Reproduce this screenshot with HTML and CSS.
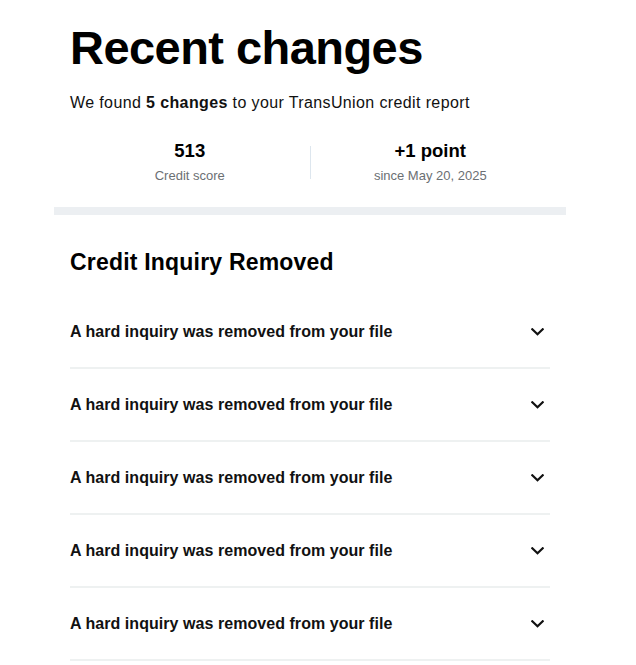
FILE: index.html
```html
<!DOCTYPE html>
<html lang="en">
<head>
<meta charset="utf-8">
<title>Recent changes</title>
<link rel="stylesheet" href="styles.css">
</head>
<body>
<main class="page">
  <header class="intro">
    <h1 class="title">Recent changes</h1>
    <p class="lead">We found <strong>5 changes</strong> to your TransUnion credit report</p>
    <div class="stats">
      <div class="stat">
        <div class="stat-value">513</div>
        <div class="stat-label">Credit score</div>
      </div>
      <div class="stat-divider"></div>
      <div class="stat">
        <div class="stat-value">+1 point</div>
        <div class="stat-label">since May 20, 2025</div>
      </div>
    </div>
  </header>
  <div class="band"></div>
  <section class="section">
    <h2 class="section-title">Credit Inquiry Removed</h2>
    <ul class="rows">
      <li class="row"><span class="row-text">A hard inquiry was removed from your file</span><svg class="chev" viewBox="0 0 13 8" width="13" height="8"><path d="M1.3 1.3 L6.5 6.3 L11.7 1.3" fill="none" stroke="#111" stroke-width="2.2" stroke-linecap="square"/></svg></li>
      <li class="row"><span class="row-text">A hard inquiry was removed from your file</span><svg class="chev" viewBox="0 0 13 8" width="13" height="8"><path d="M1.3 1.3 L6.5 6.3 L11.7 1.3" fill="none" stroke="#111" stroke-width="2.2" stroke-linecap="square"/></svg></li>
      <li class="row"><span class="row-text">A hard inquiry was removed from your file</span><svg class="chev" viewBox="0 0 13 8" width="13" height="8"><path d="M1.3 1.3 L6.5 6.3 L11.7 1.3" fill="none" stroke="#111" stroke-width="2.2" stroke-linecap="square"/></svg></li>
      <li class="row"><span class="row-text">A hard inquiry was removed from your file</span><svg class="chev" viewBox="0 0 13 8" width="13" height="8"><path d="M1.3 1.3 L6.5 6.3 L11.7 1.3" fill="none" stroke="#111" stroke-width="2.2" stroke-linecap="square"/></svg></li>
      <li class="row"><span class="row-text">A hard inquiry was removed from your file</span><svg class="chev" viewBox="0 0 13 8" width="13" height="8"><path d="M1.3 1.3 L6.5 6.3 L11.7 1.3" fill="none" stroke="#111" stroke-width="2.2" stroke-linecap="square"/></svg></li>
    </ul>
  </section>
</main>
</body>
</html>
```
FILE: styles.css
```css
* { box-sizing: border-box; }
html, body { margin: 0; padding: 0; background: #fff; }
body {
  font-family: "Liberation Sans", Arial, sans-serif;
  color: #111;
}
.page {
  width: 512px;
  margin-left: 54px;
}
.intro {
  padding: 20px 16px 22px;
}
.title {
  margin: 0;
  font-size: 47px;
  line-height: 56px;
  font-weight: 700;
  letter-spacing: -0.55px;
  color: #000;
}
.lead {
  margin: 16px 0 0;
  font-size: 16px;
  line-height: 22px;
  letter-spacing: 0.38px;
  color: #111;
}
.lead strong { font-weight: 700; }
.stats {
  display: flex;
  align-items: center;
  margin-top: 25px;
}
.stat {
  flex: 1;
  text-align: center;
}
.stat-value {
  font-size: 18.5px;
  line-height: 24px;
  font-weight: 700;
  color: #000;
}
.stat-label {
  margin-top: 4px;
  font-size: 13px;
  line-height: 18px;
  color: #6b6f73;
}
.stat-divider {
  width: 1px;
  height: 33px;
  background: #dde6ee;
}
.band {
  height: 8px;
  background: #eceff2;
}
.section {
  padding: 33px 16px 0;
}
.section-title {
  margin: 0;
  font-size: 23px;
  line-height: 28px;
  font-weight: 700;
  letter-spacing: 0.2px;
  color: #000;
}
.rows {
  list-style: none;
  margin: 20px 0 0;
  padding: 0;
}
.row {
  display: flex;
  align-items: center;
  justify-content: space-between;
  height: 73px;
  border-bottom: 2px solid #eef1f1;
  padding-right: 6px;
}
.row-text {
  font-size: 16px;
  font-weight: 700;
  letter-spacing: 0.05px;
  color: #111;
}
.chev { display: block; }
```
